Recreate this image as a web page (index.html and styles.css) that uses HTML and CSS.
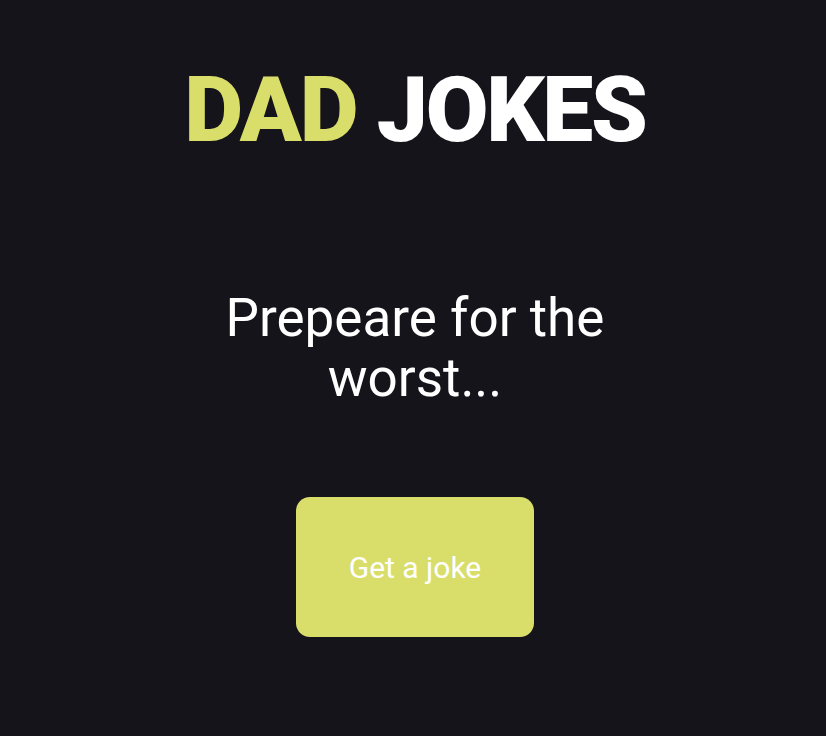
FILE: index.html
```html
<!DOCTYPE html>
<html>
<head>
<meta charset="utf-8">
<link rel="stylesheet" href="styles.css">
</head>
<body>
<main class="app">
  <h1 class="title"><span class="accent">DAD</span> JOKES</h1>
  <p class="joke">Prepeare for the worst...</p>
  <button class="btn">Get a joke</button>
</main>
</body>
</html>
```
FILE: styles.css
```css
html, body {
  margin: 0;
  padding: 0;
  background: #15141b;
  height: 100%;
}
body {
  font-family: Roboto, "Liberation Sans", sans-serif;
  color: #ffffff;
}
.app {
  display: flex;
  flex-direction: column;
  align-items: center;
  padding-top: 58px;
  padding-left: 4px;
}
.title {
  margin: 0;
  font-size: 91px;
  font-weight: 900;
  line-height: 104px;
  letter-spacing: -2.2px;
}
.accent {
  color: #d9de6b;
}
.joke {
  margin: 126px 0 0;
  width: 420px;
  text-align: center;
  font-size: 53px;
  line-height: 60px;
}
.btn {
  margin-top: 89px;
  width: 238px;
  height: 140px;
  border: none;
  border-radius: 14px;
  background: #d9de6b;
  color: #ffffff;
  font-family: Roboto, "Liberation Sans", sans-serif;
  font-size: 30px;
}
```
